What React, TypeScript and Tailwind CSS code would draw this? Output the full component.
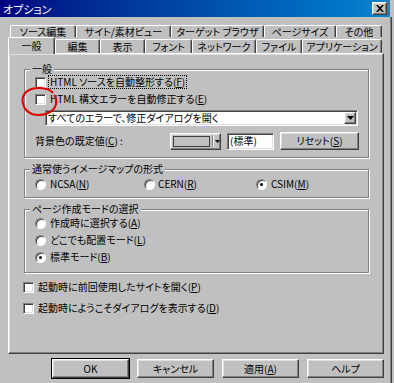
import React from "react";

const raised =
  "bg-[#c0c0c0] border border-t-white border-l-white border-r-[#404040] border-b-[#404040] shadow-[inset_-1px_-1px_0_#808080,inset_1px_1px_0_#dfdfdf]";
const sunken =
  "bg-white border border-t-[#808080] border-l-[#808080] border-r-white border-b-white shadow-[inset_1px_1px_0_#404040,inset_-1px_-1px_0_#dfdfdf]";

function U({ children }: { children: React.ReactNode }) {
  return <span className="underline underline-offset-[1px] decoration-1">{children}</span>;
}

function Check() {
  return <span className={`block w-[11px] h-[11px] shrink-0 ${sunken}`} />;
}

function Radio({ checked = false }: { checked?: boolean }) {
  return (
    <span className="relative block w-[11px] h-[11px] shrink-0 rounded-full bg-white border border-t-[#808080] border-l-[#808080] border-r-white border-b-white shadow-[inset_1px_1px_0_#404040]">
      {checked && (
        <span className="absolute left-[3px] top-[3px] w-[3px] h-[3px] rounded-full bg-black" />
      )}
    </span>
  );
}

function Group({
  title,
  className,
  children,
}: {
  title: string;
  className: string;
  children?: React.ReactNode;
}) {
  return (
    <div
      className={`relative ml-[15px] w-[345px] border border-[#808080] shadow-[inset_1px_1px_0_#fff,1px_1px_0_#fff] flex flex-col ${className}`}
    >
      <span className="absolute left-[5px] -top-[6px] px-[2px] bg-[#c0c0c0] leading-[10px]">{title}</span>
      {children}
    </div>
  );
}

function Tab({
  w,
  children,
  top = 0,
}: {
  w: number;
  children: React.ReactNode;
  top?: number;
}) {
  return (
    <div
      style={{ width: w, marginTop: top }}
      className="flex items-center justify-center border-t border-l border-t-white border-l-white border-r border-r-[#404040] shadow-[inset_-1px_0_0_#808080] rounded-t-[2px] bg-[#c0c0c0] whitespace-nowrap"
    >
      {children}
    </div>
  );
}

function Btn({ children, className = "" }: { children: React.ReactNode; className?: string }) {
  return (
    <div className={`w-[77px] h-[19px] flex items-center justify-center ${raised} ${className}`}>
      {children}
    </div>
  );
}

function DownArrow() {
  return (
    <svg width="7" height="4" viewBox="0 0 7 4">
      <path d="M0 0h7L3.5 4z" fill="#000" />
    </svg>
  );
}

export default function App() {
  return (
    <div className="w-[394px] h-[383px] bg-[#c0c0c0] overflow-hidden relative flex text-black text-[10px] leading-[12px] font-['Noto_Sans_CJK_JP',sans-serif] [font-feature-settings:'palt']">
      <div className="w-[390px] flex flex-col">
        {/* title bar */}
        <div className="h-[17px] flex items-center bg-gradient-to-r from-[#000080] to-[#1084d0] pl-[3px] pr-[3px]">
          <span className="text-white text-[11px]">オプション</span>
          <div className={`ml-auto w-[15px] h-[13px] flex items-center justify-center ${raised}`}>
            <svg width="8" height="7" viewBox="0 0 8 7">
              <path d="M0 0h2l2 2.2L6 0h2L5 3.5 8 7H6L4 4.8 2 7H0l3-3.5z" fill="#000" />
            </svg>
          </div>
        </div>

        {/* tabs */}
        <div className="mt-[8px] h-[12px] flex pl-[10px]">
          <Tab w={66}>ソース編集</Tab>
          <Tab w={95}>サイト/素材ビュー</Tab>
          <Tab w={93}>ターゲット ブラウザ</Tab>
          <Tab w={72}>ページサイズ</Tab>
          <Tab w={46}>その他</Tab>
        </div>
        <div className="h-[16px] flex pl-[8px] relative z-10">
          <div className="w-[47px] h-[17px] flex items-center justify-center border-t border-l border-t-white border-l-white border-r border-r-[#404040] shadow-[inset_-1px_0_0_#808080] rounded-t-[2px] bg-[#c0c0c0]">
            一般
          </div>
          <Tab w={45} top={2}>編集</Tab>
          <Tab w={45} top={2}>表示</Tab>
          <Tab w={47} top={2}>フォント</Tab>
          <Tab w={64} top={2}>ネットワーク</Tab>
          <Tab w={46} top={2}>ファイル</Tab>
          <Tab w={80} top={2}>アプリケーション</Tab>
        </div>

        {/* panel */}
        <div className={`ml-[8px] w-[376px] h-[301px] flex flex-col ${raised} bg-[#c0c0c0]`}>
          <Group title="一般" className="mt-[15px] h-[89px]">
            <div className="mt-[5px] h-[14px] flex items-center pl-[10px] gap-[2px]">
              <Check />
              <span className="border border-dotted border-black px-[1px] h-[14px] flex items-center">
                HTML ソースを自動整形する(<U>F</U>)
              </span>
            </div>
            <div className="mt-[3px] h-[14px] flex items-center pl-[10px] gap-[4px]">
              <Check />
              <span>
                HTML 構文エラーを自動修正する(<U>E</U>)
              </span>
            </div>
            <div className={`mt-[4px] ml-[20px] w-[313px] h-[16px] flex items-center ${sunken}`}>
              <span className="pl-[2px] flex-1">すべてのエラーで、修正ダイアログを開く</span>
              <div className={`w-[12px] h-[12px] mr-[1px] flex items-center justify-center ${raised}`}>
                <DownArrow />
              </div>
            </div>
            <div className="mt-[6px] h-[18px] flex items-center pl-[10px]">
              <span className="w-[135px]">
                背景色の既定値(<U>C</U>) :
              </span>
              <div className={`w-[51px] h-[17px] flex items-center ${raised}`}>
                <span className="ml-[2px] w-[37px] h-[11px] border border-[#404040] bg-[#c0c0c0]" />
                <span className="ml-[2px] w-[1px] h-[12px] bg-[#808080] shadow-[1px_0_0_#fff]" />
                <span className="ml-[2px] flex items-center">
                  <svg width="5" height="3" viewBox="0 0 5 3">
                    <path d="M0 0h5L2.5 3z" fill="#000" />
                  </svg>
                </span>
              </div>
              <div className={`ml-[6px] w-[47px] h-[17px] flex items-center pl-[2px] ${sunken}`}>(標準)</div>
              <div className={`ml-[6px] w-[79px] h-[18px] flex items-center justify-center ${raised}`}>
                リセット(<U>S</U>)
              </div>
            </div>
          </Group>

          <Group title="通常使うイメージマップの形式" className="mt-[11px] h-[29px]">
            <div className="mt-[7px] h-[14px] flex items-center pl-[10px]">
              <div className="w-[109px] flex items-center gap-[4px]">
                <Radio />
                <span>
                  NCSA(<U>N</U>)
                </span>
              </div>
              <div className="w-[112px] flex items-center gap-[3px]">
                <Radio />
                <span>
                  CERN(<U>R</U>)
                </span>
              </div>
              <div className="flex items-center gap-[4px]">
                <Radio checked />
                <span>
                  CSIM(<U>M</U>)
                </span>
              </div>
            </div>
          </Group>

          <Group title="ページ作成モードの選択" className="mt-[11px] h-[64px]">
            <div className="mt-[6px] h-[14px] flex items-center pl-[10px] gap-[4px]">
              <Radio />
              <span>
                作成時に選択する(<U>A</U>)
              </span>
            </div>
            <div className="mt-[3px] h-[14px] flex items-center pl-[10px] gap-[4px]">
              <Radio />
              <span>
                どこでも配置モード(<U>L</U>)
              </span>
            </div>
            <div className="mt-[3px] h-[14px] flex items-center pl-[10px] gap-[4px]">
              <Radio checked />
              <span>
                標準モード(<U>B</U>)
              </span>
            </div>
          </Group>

          <div className="mt-[7px] ml-[14px] h-[14px] flex items-center gap-[4px]">
            <Check />
            <span>
              起動時に前回使用したサイトを開く(<U>P</U>)
            </span>
          </div>
          <div className="mt-[7px] ml-[14px] h-[14px] flex items-center gap-[4px]">
            <Check />
            <span>
              起動時にようこそダイアログを表示する(<U>D</U>)
            </span>
          </div>
        </div>

        {/* buttons */}
        <div className="mt-[5px] ml-[52px] flex gap-[8px]">
          <Btn className="outline outline-1 outline-black">OK</Btn>
          <Btn>キャンセル</Btn>
          <Btn>
            適用(<U>A</U>)
          </Btn>
          <Btn>ヘルプ</Btn>
        </div>
      </div>
      <div className="w-[1px] mt-[17px] bg-[#808080]" />
      <div className="w-[1px] mt-[17px] bg-[#404040]" />

      {/* red annotation circle */}
      <svg
        className="absolute left-[21px] top-[86px] pointer-events-none"
        width="38"
        height="31"
        viewBox="0 0 38 31"
      >
        <path
          d="M32 7 C27 1 12 0 5 6 C-1 12 1 24 11 28 C21 31 33 27 35 18 C36 14 35 11 33 9"
          fill="none"
          stroke="#e00000"
          strokeWidth="2"
        />
      </svg>
    </div>
  );
}
